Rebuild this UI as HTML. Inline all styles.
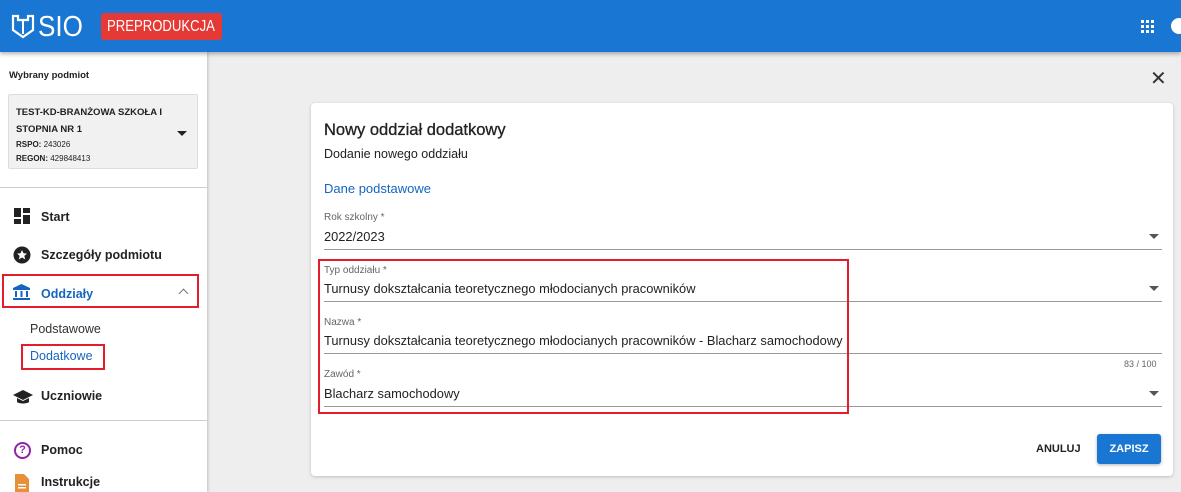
<!DOCTYPE html>
<html><head><meta charset="utf-8"><style>
*{box-sizing:border-box;margin:0;padding:0}
body{width:1181px;height:492px;overflow:hidden;font-family:"Liberation Sans",sans-serif;background:#eeeeee;position:relative;color:#222}
.hdr{position:absolute;left:0;top:0;width:1181px;height:52px;background:#1976d2;box-shadow:0 2px 4px rgba(0,0,0,.3);z-index:2}
.side{position:absolute;left:0;top:52px;width:207px;height:440px;background:#fff;box-shadow:1px 0 3px rgba(0,0,0,.2)}
.abs{position:absolute}
.card{position:absolute;left:311px;top:103px;width:862px;height:373px;background:#fff;border-radius:4px;box-shadow:0 1px 3px rgba(0,0,0,.2)}
.lbl{position:absolute;font-size:10px;color:#666}
.val{position:absolute;font-size:12.85px;color:#222}
.line{position:absolute;height:1px;background:#999}
.arr{position:absolute;width:0;height:0;border-left:5px solid transparent;border-right:5px solid transparent;border-top:5px solid #555}
.nav{position:absolute;left:41px;font-size:12.5px;font-weight:bold;color:#222}
.red{position:absolute;border:2.5px solid #e31e2c}
</style></head><body>
<div class="hdr">
<svg class="abs" style="left:10px;top:13px" width="26" height="26" viewBox="0 0 26 26"><path d="M3 3v14l10 7 10-7V3h-5v4h-10V3z" fill="none" stroke="#fff" stroke-width="2.2"/><path d="M13 7v14" stroke="#fff" stroke-width="2"/></svg>
<div class="abs" style="left:38px;top:11px;font-size:29px;color:#fff;transform:scaleX(0.9);transform-origin:0 0">SIO</div>
<div class="abs" style="left:101px;top:13px;width:121px;height:27px;background:#e53935;border-radius:3px;overflow:hidden"><div style="color:#fff;font-size:16px;line-height:27px;white-space:nowrap;transform:scaleX(0.82);transform-origin:0 0;margin-left:6px">PREPRODUKCJA</div></div>
<svg class="abs" style="left:1141px;top:20px" width="13" height="13" viewBox="0 0 13 13" fill="#fff"><rect x="0" y="0" width="3" height="3"/><rect x="5" y="0" width="3" height="3"/><rect x="10" y="0" width="3" height="3"/><rect x="0" y="5" width="3" height="3"/><rect x="5" y="5" width="3" height="3"/><rect x="10" y="5" width="3" height="3"/><rect x="0" y="10" width="3" height="3"/><rect x="5" y="10" width="3" height="3"/><rect x="10" y="10" width="3" height="3"/></svg>
<div class="abs" style="left:1171px;top:18px;width:16px;height:16px;border-radius:50%;background:#fff"></div>
</div>
<div class="side">
<div class="abs" style="left:9px;top:18px;font-size:9.5px;font-weight:bold">Wybrany podmiot</div>
<div class="abs" style="left:8px;top:42px;width:190px;height:75px;background:#f1f1f1;border:1px solid #ddd;border-radius:2px">
<div class="abs" style="left:7px;top:9px;font-size:9.5px;font-weight:bold;line-height:17px">TEST-KD-BRANŻOWA SZKOŁA I<br>STOPNIA NR 1</div>
<div class="abs" style="left:7px;top:43px;font-size:8px;line-height:14px"><b>RSPO:</b> 243026<br><b>REGON:</b> 429848413</div>
<div class="arr" style="left:168px;top:36px;border-top-color:#222"></div></div>
<div class="abs" style="left:0;top:135px;width:207px;height:1px;background:#ccc"></div>
<svg class="abs" style="left:14px;top:156px" width="16" height="16"><rect x="0" y="0" width="7" height="9" fill="#222"/><rect x="9" y="0" width="7" height="5" fill="#222"/><rect x="0" y="11" width="7" height="5" fill="#222"/><rect x="9" y="7" width="7" height="9" fill="#222"/></svg>
<div class="nav" style="top:158px">Start</div>
<svg class="abs" style="left:13px;top:194px" width="18" height="18"><circle cx="9" cy="9" r="8.5" fill="#222"/><path d="M9 4l1.5 3.3 3.5.3-2.7 2.3.9 3.5L9 11.5l-3.2 1.9.9-3.5L4 7.6l3.5-.3z" fill="#fff"/></svg>
<div class="nav" style="top:196px">Szczegóły podmiotu</div>
<div class="red" style="left:2px;top:222px;width:197px;height:34px"></div>
<svg class="abs" style="left:13px;top:232px" width="17" height="16" fill="#1565c0"><path d="M8.5 0L0 4v2h17V4z"/><rect x="2" y="7" width="2" height="6"/><rect x="7.5" y="7" width="2" height="6"/><rect x="13" y="7" width="2" height="6"/><rect x="0" y="14" width="17" height="2"/></svg>
<div class="nav" style="top:235px;color:#1565c0">Oddziały</div>
<div class="abs" style="left:180px;top:238px;width:7px;height:7px;border-left:1.5px solid #777;border-top:1.5px solid #777;transform:rotate(45deg)"></div>
<div class="abs" style="left:30px;top:270px;font-size:12.5px;color:#333">Podstawowe</div>
<div class="red" style="left:21px;top:292px;width:84px;height:26px"></div>
<div class="abs" style="left:30px;top:297px;font-size:12.5px;color:#1565c0">Dodatkowe</div>
<svg class="abs" style="left:13px;top:338px" width="20" height="14"><path d="M10 0L0 5l10 5 10-5z" fill="#222"/><path d="M4 8v4c2 2 10 2 12 0V8l-6 3z" fill="#222"/></svg>
<div class="nav" style="top:337px">Uczniowie</div>
<div class="abs" style="left:0;top:368px;width:207px;height:1px;background:#ccc"></div>
<div class="abs" style="left:14px;top:390px;width:17px;height:17px;border:2px solid #8e24aa;border-radius:50%;color:#8e24aa;font-size:11px;font-weight:bold;text-align:center;line-height:13px">?</div>
<div class="nav" style="top:391px">Pomoc</div>
<svg class="abs" style="left:15px;top:422px" width="14" height="18"><path d="M0 0h9l5 5v13H0z" fill="#e69138"/><rect x="3" y="10" width="8" height="1.5" fill="#fff"/><rect x="3" y="13" width="8" height="1.5" fill="#fff"/></svg>
<div class="nav" style="top:423px">Instrukcje</div>
</div>
<div class="abs" style="left:1150px;top:70px;font-size:20px;color:#333;line-height:18px">✕</div>
<div class="card">
<div class="abs" style="left:13px;top:18px;font-size:16.5px;color:#222;-webkit-text-stroke:0.3px #222">Nowy oddział dodatkowy</div>
<div class="abs" style="left:13px;top:44px;font-size:12.5px;color:#222">Dodanie nowego oddziału</div>
<div class="abs" style="left:13px;top:78px;font-size:13px;color:#1565c0">Dane podstawowe</div>
<div class="lbl" style="left:13px;top:109px">Rok szkolny *</div>
<div class="val" style="left:13px;top:126px">2022/2023</div>
<div class="arr" style="left:838px;top:131px"></div>
<div class="line" style="left:13px;top:146px;width:838px"></div>
<div class="lbl" style="left:13px;top:162px">Typ oddziału *</div>
<div class="val" style="left:13px;top:178px">Turnusy dokształcania teoretycznego młodocianych pracowników</div>
<div class="arr" style="left:838px;top:183px"></div>
<div class="line" style="left:13px;top:198px;width:838px"></div>
<div class="lbl" style="left:13px;top:214px">Nazwa *</div>
<div class="val" style="left:13px;top:230px">Turnusy dokształcania teoretycznego młodocianych pracowników - Blacharz samochodowy</div>
<div class="line" style="left:13px;top:250px;width:838px"></div>
<div class="abs" style="left:813px;top:256px;font-size:9px;color:#666">83 / 100</div>
<div class="lbl" style="left:13px;top:266px">Zawód *</div>
<div class="val" style="left:13px;top:283px">Blacharz samochodowy</div>
<div class="arr" style="left:838px;top:288px"></div>
<div class="line" style="left:13px;top:303px;width:838px"></div>
<div class="abs" style="left:725px;top:340px;font-size:11px;font-weight:bold;color:#222">ANULUJ</div>
<div class="abs" style="left:786px;top:331px;width:64px;height:30px;background:#1976d2;border-radius:3px;color:#fff;font-size:11px;font-weight:bold;text-align:center;line-height:30px;box-shadow:0 1px 3px rgba(0,0,0,.3)">ZAPISZ</div>
</div>
<div class="red" style="left:318px;top:259px;width:531px;height:155px"></div>
</body></html>
